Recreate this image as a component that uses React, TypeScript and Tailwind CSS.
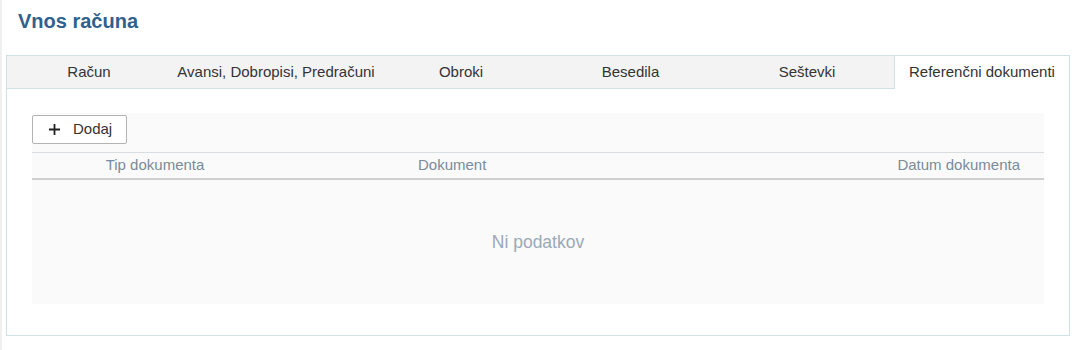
import React from "react";

const tabs = [
  { label: "Račun", w: "w-[164px]" },
  { label: "Avansi, Dobropisi, Predračuni", w: "w-[210px]" },
  { label: "Obroki", w: "w-[160px]" },
  { label: "Besedila", w: "w-[179px]" },
  { label: "Seštevki", w: "w-[174px]" },
];

function PlusIcon() {
  return (
    <svg width="11" height="11" viewBox="0 0 11 11" className="text-[#222]">
      <path d="M5.5 0v11M0 5.5h11" stroke="currentColor" strokeWidth="1.8" />
    </svg>
  );
}

export default function App() {
  return (
    <div className="h-[350px] w-[1078px] border-l-2 border-[#f0f0f0] bg-white font-['Liberation_Sans',Arial,sans-serif]">
      <h1 className="pl-[16px] pt-[9px] text-[20px] font-bold leading-[24px] text-[#30618e]">
        Vnos računa
      </h1>
      <div className="ml-[4px] mt-[22px] w-[1064px] border border-[#cfe0e6]">
        <div className="flex h-[33px] bg-[#f3f3f3]">
          {tabs.map((t) => (
            <div
              key={t.label}
              className={`${t.w} flex items-center justify-center border-b border-[#cfe0e6] text-[15px] text-[#333]`}
            >
              {t.label}
            </div>
          ))}
          <div className="flex flex-1 items-center justify-center border-l border-[#cfe0e6] bg-white text-[15px] text-[#333]">
            Referenčni dokumenti
          </div>
        </div>
        <div className="px-[25px] pb-[31px] pt-[24px]">
          <div className="bg-[#fafafa]">
            <div className="pt-[2px]">
              <button className="flex h-[29px] w-[95px] items-center gap-[13px] rounded-[2px] border border-[#b3b3b3] bg-white pl-[16px] text-[15px] text-[#333]">
                <PlusIcon />
                Dodaj
              </button>
            </div>
            <div className="mt-[8px] flex h-[28px] items-center border-b-2 border-t border-b-[#cfcfcf] border-t-[#d8dde2] text-[15px] text-[#7b8b99]">
              <div className="w-[246px] text-center">Tip dokumenta</div>
              <div className="flex-1 pl-[140px]">Dokument</div>
              <div className="pr-[24px] text-right">Datum dokumenta</div>
            </div>
            <div className="flex h-[124px] items-center justify-center text-[17.5px] text-[#9aa9b6]">
              Ni podatkov
            </div>
          </div>
        </div>
      </div>
    </div>
  );
}
